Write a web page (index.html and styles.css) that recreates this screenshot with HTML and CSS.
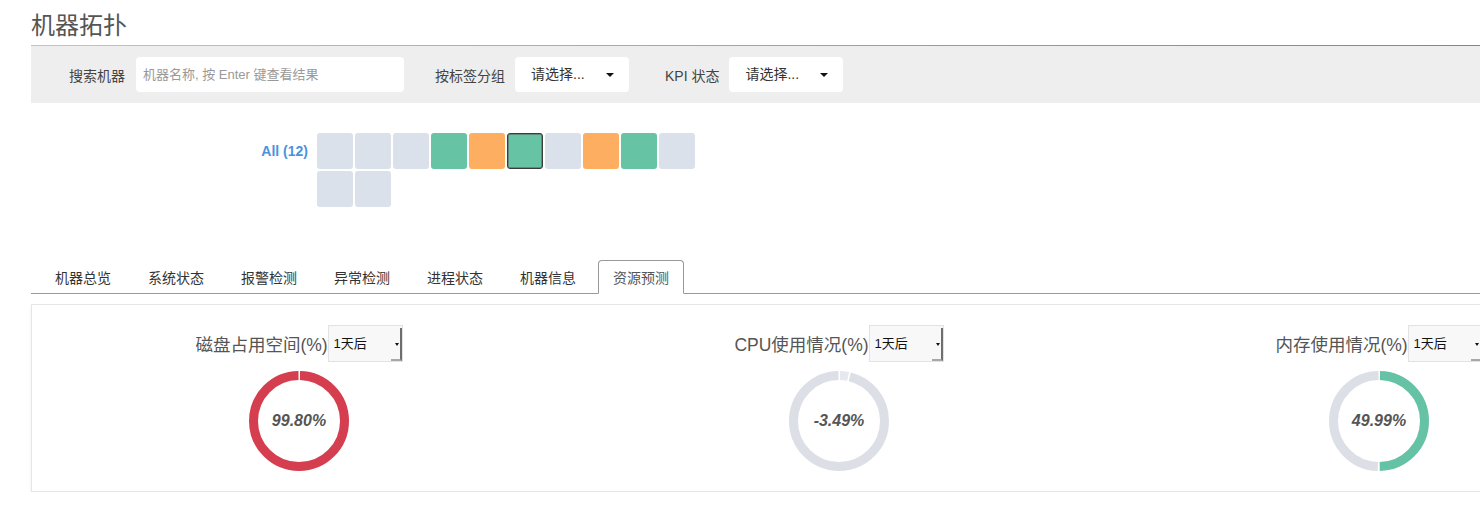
FILE: index.html
```html
<!DOCTYPE html>
<html lang="zh">
<head>
<meta charset="utf-8">
<title>机器拓扑</title>
<link rel="stylesheet" href="styles.css">
</head>
<body>
<div class="page">
  <h1 class="title">机器拓扑</h1>
  <div class="rule"></div>

  <div class="filters">
    <label class="f-label f-label-first">搜索机器</label>
    <div class="f-input">机器名称, 按 Enter 键查看结果</div>
    <label class="f-label f-label-tag">按标签分组</label>
    <div class="f-select"><span>请选择...</span><i class="caret"></i></div>
    <label class="f-label f-label-kpi">KPI 状态</label>
    <div class="f-select"><span>请选择...</span><i class="caret"></i></div>
  </div>

  <div class="topo">
    <div class="topo-label">All (12)</div>
    <div class="topo-grid">
      <div class="cell gray"></div>
      <div class="cell gray"></div>
      <div class="cell gray"></div>
      <div class="cell green"></div>
      <div class="cell orange"></div>
      <div class="cell green selected"></div>
      <div class="cell gray"></div>
      <div class="cell orange"></div>
      <div class="cell green"></div>
      <div class="cell gray"></div>
      <div class="cell gray"></div>
      <div class="cell gray"></div>
    </div>
  </div>

  <ul class="tabs">
    <li class="tab">机器总览</li>
    <li class="tab">系统状态</li>
    <li class="tab">报警检测</li>
    <li class="tab">异常检测</li>
    <li class="tab">进程状态</li>
    <li class="tab">机器信息</li>
    <li class="tab active">资源预测</li>
  </ul>

  <div class="panel">
    <div class="panel-grid">
      <div class="col">
        <div class="col-head">
          <span class="col-title">磁盘占用空间(%)</span>
          <div class="mini-select">1天后<span class="mini-btn"><i class="mini-caret"></i></span></div>
        </div>
        <div class="donut">
          <svg width="102" height="102" viewBox="0 0 102 102">
            <g transform="rotate(-90 51 51)" fill="none" stroke-width="9">
              <circle cx="51" cy="51" r="45.5" stroke="#d53e4f" stroke-dasharray="283.9 400" stroke-dashoffset="-1"></circle>
            </g>
          </svg>
          <span class="donut-val">99.80%</span>
        </div>
      </div>
      <div class="col">
        <div class="col-head">
          <span class="col-title">CPU使用情况(%)</span>
          <div class="mini-select">1天后<span class="mini-btn"><i class="mini-caret"></i></span></div>
        </div>
        <div class="donut">
          <svg width="102" height="102" viewBox="0 0 102 102">
            <g transform="rotate(-90 51 51)" fill="none" stroke-width="9">
              <circle cx="51" cy="51" r="45.5" stroke="#e6e8ee" stroke-dasharray="8.2 400" stroke-dashoffset="-1"></circle>
              <circle cx="51" cy="51" r="45.5" stroke="#dcdfe6" stroke-dasharray="274 400" stroke-dashoffset="-10.9"></circle>
            </g>
          </svg>
          <span class="donut-val">-3.49%</span>
        </div>
      </div>
      <div class="col">
        <div class="col-head">
          <span class="col-title">内存使用情况(%)</span>
          <div class="mini-select">1天后<span class="mini-btn"><i class="mini-caret"></i></span></div>
        </div>
        <div class="donut">
          <svg width="102" height="102" viewBox="0 0 102 102">
            <g transform="rotate(-90 51 51)" fill="none" stroke-width="9">
              <circle cx="51" cy="51" r="45.5" stroke="#66c2a5" stroke-dasharray="141 400" stroke-dashoffset="-1"></circle>
              <circle cx="51" cy="51" r="45.5" stroke="#dcdfe6" stroke-dasharray="141 400" stroke-dashoffset="-143.9"></circle>
            </g>
          </svg>
          <span class="donut-val">49.99%</span>
        </div>
      </div>
    </div>
  </div>
</div>
</body>
</html>
```

FILE: styles.css
```css
html, body {
  margin: 0;
  padding: 0;
  overflow: hidden;
  background: #fff;
}

body {
  font-family: "Liberation Sans", "Noto Sans CJK SC", sans-serif;
  color: #333;
}

.page {
  width: 1620px;
  padding-left: 31px;
}

.title {
  margin: 0;
  padding-top: 9px;
  height: 45px;
  box-sizing: border-box;
  font-size: 24px;
  line-height: 30px;
  font-weight: normal;
  color: #555;
  font-family: "Noto Sans CJK SC", sans-serif;
}

.rule {
  height: 1px;
  background: linear-gradient(to right, #f6c72a 0%, #f3a01a 35%, #f07a14 70%, #ee5b16 100%);
}

.filters {
  height: 57px;
  background: #eeeeee;
  display: flex;
  align-items: center;
  padding-left: 38px;
}

.f-label {
  font-size: 14px;
  color: #444;
  font-family: "Noto Sans CJK SC", sans-serif;
}

.f-label-first { margin-right: 11px; }
.f-label-tag { margin-left: 31px; margin-right: 10px; }
.f-label-kpi { margin-left: 36px; margin-right: 10px; font-family: "Liberation Sans", "Noto Sans CJK SC", sans-serif; }

.f-input {
  width: 268px;
  height: 35px;
  box-sizing: border-box;
  background: #fff;
  border-radius: 4px;
  padding-left: 7px;
  font-size: 13px;
  line-height: 35px;
  color: #999;
}

.f-select {
  position: relative;
  width: 114px;
  height: 35px;
  box-sizing: border-box;
  background: #fff;
  border-radius: 4px;
  padding-left: 16px;
  font-size: 14px;
  line-height: 35px;
  color: #333;
}

.caret {
  position: absolute;
  left: 91px;
  top: 16px;
  width: 0;
  height: 0;
  border-left: 4px solid transparent;
  border-right: 4px solid transparent;
  border-top: 4px solid #111;
}

.topo {
  display: flex;
  margin-top: 30px;
}

.topo-label {
  width: 286px;
  box-sizing: border-box;
  padding-right: 9px;
  text-align: right;
  font-size: 14px;
  font-weight: bold;
  line-height: 36px;
  color: #4a93dc;
}

.topo-grid {
  width: 380px;
  display: flex;
  flex-wrap: wrap;
  gap: 2px;
}

.cell {
  width: 36px;
  height: 36px;
  box-sizing: border-box;
  border-radius: 3px;
}

.cell.gray { background: #dbe1ea; }
.cell.green { background: #66c4a5; }
.cell.orange { background: #fdae61; }
.cell.selected { border: 1px solid #3a3a3a; box-shadow: inset 0 0 0 0.5px #555; }

.tabs {
  list-style: none;
  margin: 53px 0 0 0;
  padding: 0 0 0 9px;
  display: flex;
  border-bottom: 1px solid #999;
}

.tab {
  height: 33px;
  box-sizing: border-box;
  padding: 0 14px;
  margin-right: 7px;
  margin-bottom: -1px;
  border: 1px solid transparent;
  border-bottom: none;
  font-size: 14px;
  line-height: 33px;
  color: #333;
  font-family: "Noto Sans CJK SC", sans-serif;
}

.tab.active {
  height: 34px;
  border: 1px solid #999;
  border-bottom: 1px solid #fff;
  border-radius: 4px 4px 0 0;
  background: #fff;
  color: #555;
}

.panel {
  margin-top: 10px;
  border: 1px solid #e6e6e6;
  box-shadow: 0 2px 3px rgba(0, 0, 0, 0.08);
  padding: 20px 0 19px 0;
}

.panel-grid {
  margin-left: -3px;
  display: grid;
  grid-template-columns: 540px 540px 540px;
}

.col {
  display: flex;
  flex-direction: column;
  align-items: center;
}

.col-head {
  display: flex;
  align-items: center;
  height: 37px;
}

.col-title {
  font-size: 17.5px;
  color: #555;
}

.mini-select {
  position: relative;
  width: 75px;
  height: 37px;
  box-sizing: border-box;
  background: #f8f8f8;
  border: 1px solid #e2e2e2;
  padding-left: 5px;
  font-size: 13px;
  line-height: 35px;
  color: #111;
}

.mini-btn {
  position: absolute;
  right: 0;
  top: 2px;
  bottom: 0;
  width: 9px;
  border-right: 2px solid #6e6e6e;
  border-bottom: 2px solid #a8a8a8;
}

.mini-caret {
  position: absolute;
  right: 1px;
  top: 15px;
  width: 0;
  height: 0;
  border-left: 2px solid transparent;
  border-right: 2px solid transparent;
  border-top: 3px solid #111;
}

.donut {
  position: relative;
  width: 102px;
  height: 102px;
  margin-top: 8px;
}

.donut svg {
  display: block;
}

.donut-val {
  position: absolute;
  left: 0;
  right: 0;
  top: 0;
  bottom: 0;
  display: flex;
  align-items: center;
  justify-content: center;
  font-size: 16px;
  font-weight: bold;
  font-style: italic;
  color: #555;
}
```
